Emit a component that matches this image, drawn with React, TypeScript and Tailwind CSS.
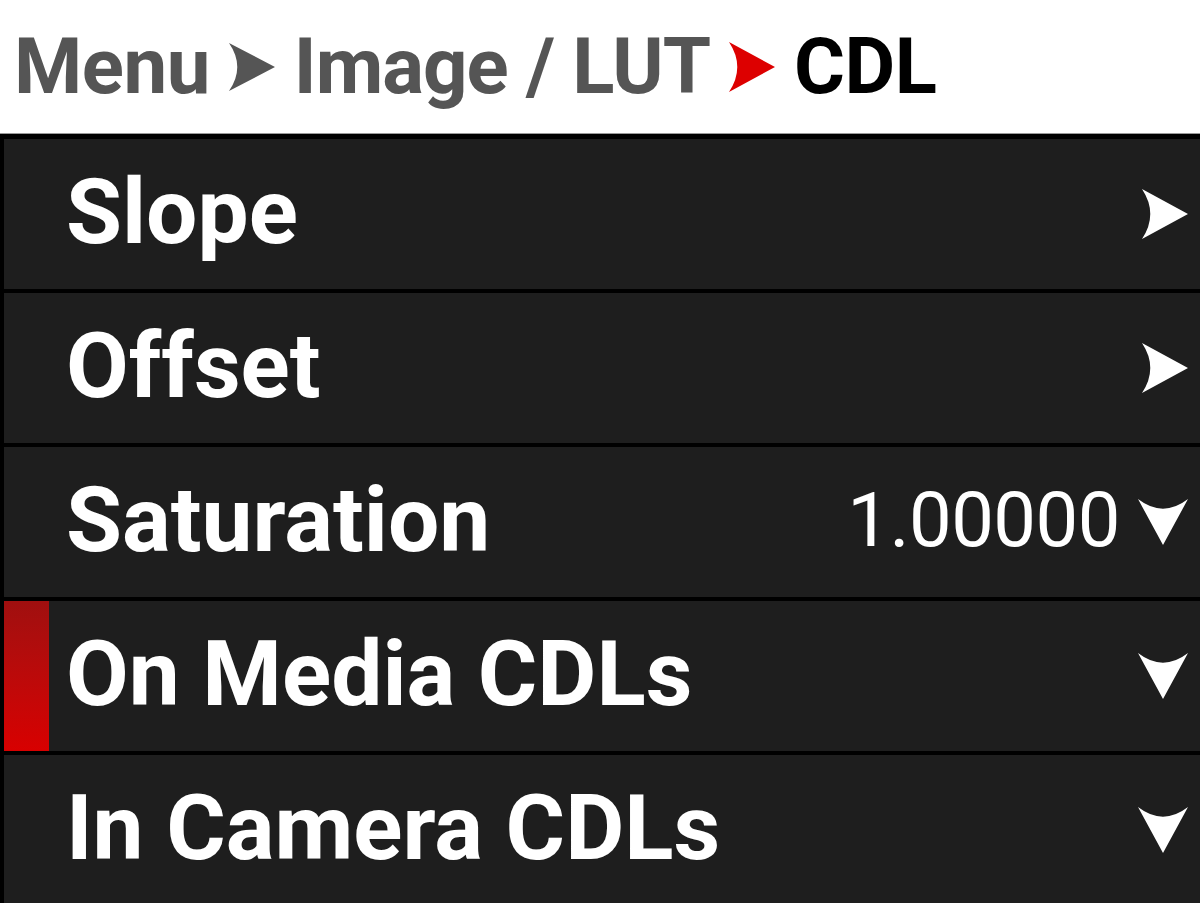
import React from "react";

const RightArrow = ({ w, h, color, className = "" }: { w: number; h: number; color: string; className?: string }) => (
  <svg width={w} height={h} viewBox={`0 0 ${w} ${h}`} className={className}>
    <path d={`M0 0 L${w} ${h / 2} L0 ${h} Q${w * 0.36} ${h / 2} 0 0 Z`} fill={color} />
  </svg>
);

const DownArrow = ({ w, h }: { w: number; h: number }) => (
  <svg width={w} height={h} viewBox={`0 0 ${w} ${h}`}>
    <path d={`M0 0 Q${w / 2} ${h * 0.42} ${w} 0 L${w / 2} ${h} Z`} fill="#ffffff" />
  </svg>
);

type Row = { label: string; value?: string; kind: "right" | "down"; active?: boolean };

const rows: Row[] = [
  { label: "Slope", kind: "right" },
  { label: "Offset", kind: "right" },
  { label: "Saturation", value: "1.00000", kind: "down" },
  { label: "On Media CDLs", kind: "down", active: true },
  { label: "In Camera CDLs", kind: "down" },
];

export default function App() {
  return (
    <div className="w-[1200px] h-[903px] overflow-hidden bg-white font-['Roboto',sans-serif]">
      <div className="h-[134px] flex items-center pl-[14px] gap-[19px] border-b border-[#9a9a9a] bg-white">
        <span className="text-[78px] font-bold text-[#555555] leading-none tracking-[-0.5px]">Menu</span>
        <RightArrow w={46} h={48} color="#555555" />
        <span className="text-[78px] font-bold text-[#555555] leading-none tracking-[-1px]">Image / LUT</span>
        <RightArrow w={46} h={50} color="#dd0000" />
        <span className="text-[78px] font-bold text-black leading-none tracking-[-0.5px]">CDL</span>
      </div>
      <div className="bg-black pl-[4px] pt-[5px] flex flex-col gap-[4px]">
        {rows.map((r) => (
          <div key={r.label} className="h-[150px] bg-[#1e1e1e] flex items-center pr-[12px]">
            <div className="w-[62px] h-full flex-none">
              {r.active && <div className="w-[45px] h-full bg-gradient-to-b from-[#a00f0f] to-[#d80000]" />}
            </div>
            <span className="flex-1 text-[91px] font-bold text-white leading-none pb-[4px]">
              {r.label}
            </span>
            {r.value && (
              <span className="text-[76px] font-normal text-white leading-none tracking-[-0.5px] mr-[18px] pb-[4px]">{r.value}</span>
            )}
            {r.kind === "right" ? <RightArrow w={46} h={50} color="#ffffff" /> : <DownArrow w={50} h={46} />}
          </div>
        ))}
      </div>
    </div>
  );
}
